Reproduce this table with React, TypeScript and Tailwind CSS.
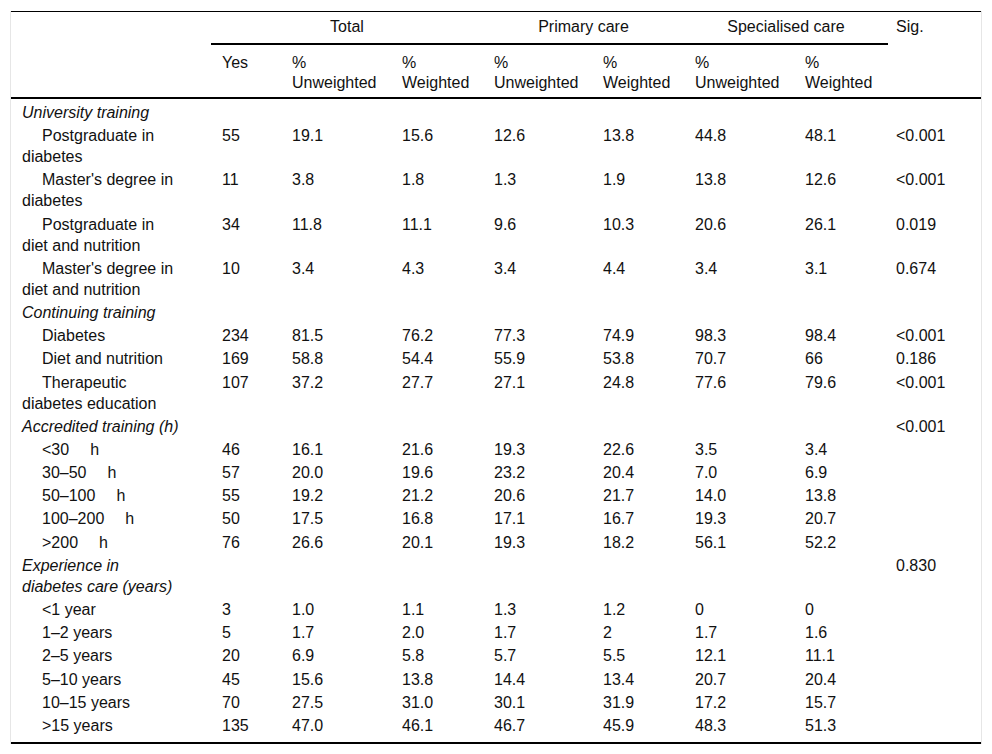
import React from 'react'

type Row = {
  label: string
  group?: boolean
  values?: string[]
  sig?: string
}

// gap between the hour range and its unit
const gap = '\u00a0\u00a0\u00a0\u00a0\u2009'

const rows: Row[] = [
  { label: 'University training', group: true },
  { label: 'Postgraduate in diabetes', values: ['55', '19.1', '15.6', '12.6', '13.8', '44.8', '48.1'], sig: '<0.001' },
  { label: "Master's degree in diabetes", values: ['11', '3.8', '1.8', '1.3', '1.9', '13.8', '12.6'], sig: '<0.001' },
  { label: 'Postgraduate in diet and nutrition', values: ['34', '11.8', '11.1', '9.6', '10.3', '20.6', '26.1'], sig: '0.019' },
  { label: "Master's degree in diet and nutrition", values: ['10', '3.4', '4.3', '3.4', '4.4', '3.4', '3.1'], sig: '0.674' },
  { label: 'Continuing training', group: true },
  { label: 'Diabetes', values: ['234', '81.5', '76.2', '77.3', '74.9', '98.3', '98.4'], sig: '<0.001' },
  { label: 'Diet and nutrition', values: ['169', '58.8', '54.4', '55.9', '53.8', '70.7', '66'], sig: '0.186' },
  { label: 'Therapeutic diabetes education', values: ['107', '37.2', '27.7', '27.1', '24.8', '77.6', '79.6'], sig: '<0.001' },
  { label: 'Accredited training (h)', group: true, sig: '<0.001' },
  { label: `<30${gap}h`, values: ['46', '16.1', '21.6', '19.3', '22.6', '3.5', '3.4'] },
  { label: `30–50${gap}h`, values: ['57', '20.0', '19.6', '23.2', '20.4', '7.0', '6.9'] },
  { label: `50–100${gap}h`, values: ['55', '19.2', '21.2', '20.6', '21.7', '14.0', '13.8'] },
  { label: `100–200${gap}h`, values: ['50', '17.5', '16.8', '17.1', '16.7', '19.3', '20.7'] },
  { label: `>200${gap}h`, values: ['76', '26.6', '20.1', '19.3', '18.2', '56.1', '52.2'] },
  { label: 'Experience in diabetes care (years)', group: true, sig: '0.830' },
  { label: '<1 year', values: ['3', '1.0', '1.1', '1.3', '1.2', '0', '0'] },
  { label: '1–2 years', values: ['5', '1.7', '2.0', '1.7', '2', '1.7', '1.6'] },
  { label: '2–5 years', values: ['20', '6.9', '5.8', '5.7', '5.5', '12.1', '11.1'] },
  { label: '5–10 years', values: ['45', '15.6', '13.8', '14.4', '13.4', '20.7', '20.4'] },
  { label: '10–15 years', values: ['70', '27.5', '31.0', '30.1', '31.9', '17.2', '15.7'] },
  { label: '>15 years', values: ['135', '47.0', '46.1', '46.7', '45.9', '48.3', '51.3'] },
]

function PctHead({ kind }: { kind: string }) {
  return (
    <th className="pl-[11px] pr-1 pt-[8px] pb-[4px] text-left align-top font-normal leading-5">
      %<br />
      {kind}
    </th>
  )
}

export default function App() {
  return (
    <div className="bg-white pl-[10px] pt-[11px] pb-[9px] font-['Liberation_Sans',Arial,sans-serif] text-[16px] leading-[21px] text-[#111]">
      <div className="w-[972px] border-x border-[#e6e6e6]">
        <table className="w-[970px] table-fixed border-collapse border-t border-b-2 border-black">
          <colgroup>
            <col className="w-[200px]" />
            <col className="w-[70px]" />
            <col className="w-[110px]" />
            <col className="w-[92px]" />
            <col className="w-[109px]" />
            <col className="w-[92px]" />
            <col className="w-[110px]" />
            <col className="w-[94px]" />
            <col className="w-[93px]" />
          </colgroup>
          <thead className="leading-5">
            <tr>
              <th rowSpan={2} className="border-b-2 border-black" />
              <th colSpan={3} className="border-b-2 border-black pt-[5px] pb-[6px] text-center font-normal">Total</th>
              <th colSpan={2} className="border-b-2 border-black pt-[5px] pb-[6px] text-center font-normal">Primary care</th>
              <th colSpan={2} className="border-b-2 border-black pt-[5px] pb-[6px] text-center font-normal">Specialised care</th>
              <th rowSpan={2} className="border-b-2 border-black pl-[8px] pt-[5px] text-left align-top font-normal">Sig.</th>
            </tr>
            <tr className="border-b-2 border-black">
              <th className="pl-[11px] pt-[8px] pb-[4px] text-left align-top font-normal">Yes</th>
              <PctHead kind="Unweighted" />
              <PctHead kind="Weighted" />
              <PctHead kind="Unweighted" />
              <PctHead kind="Weighted" />
              <PctHead kind="Unweighted" />
              <PctHead kind="Weighted" />
            </tr>
          </thead>
          <tbody>
            {rows.map((r, i) => {
              const first = i === 0
              const last = i === rows.length - 1
              const py = `${first ? 'pt-[3px]' : 'pt-[1.1px]'} ${last ? 'pb-[6px]' : 'pb-[1.1px]'}`
              return (
                <tr key={i}>
                  <td className={`pl-[11px] pr-[31px] align-top ${py} ${r.group ? 'italic' : 'indent-5'}`}>
                    {r.label}
                  </td>
                  {(r.values ?? ['', '', '', '', '', '', '']).map((v, j) => (
                    <td key={j} className={`pl-[11px] align-top ${py}`}>
                      {v}
                    </td>
                  ))}
                  <td className={`pl-[8px] align-top ${py}`}>{r.sig ?? ''}</td>
                </tr>
              )
            })}
          </tbody>
        </table>
      </div>
    </div>
  )
}
